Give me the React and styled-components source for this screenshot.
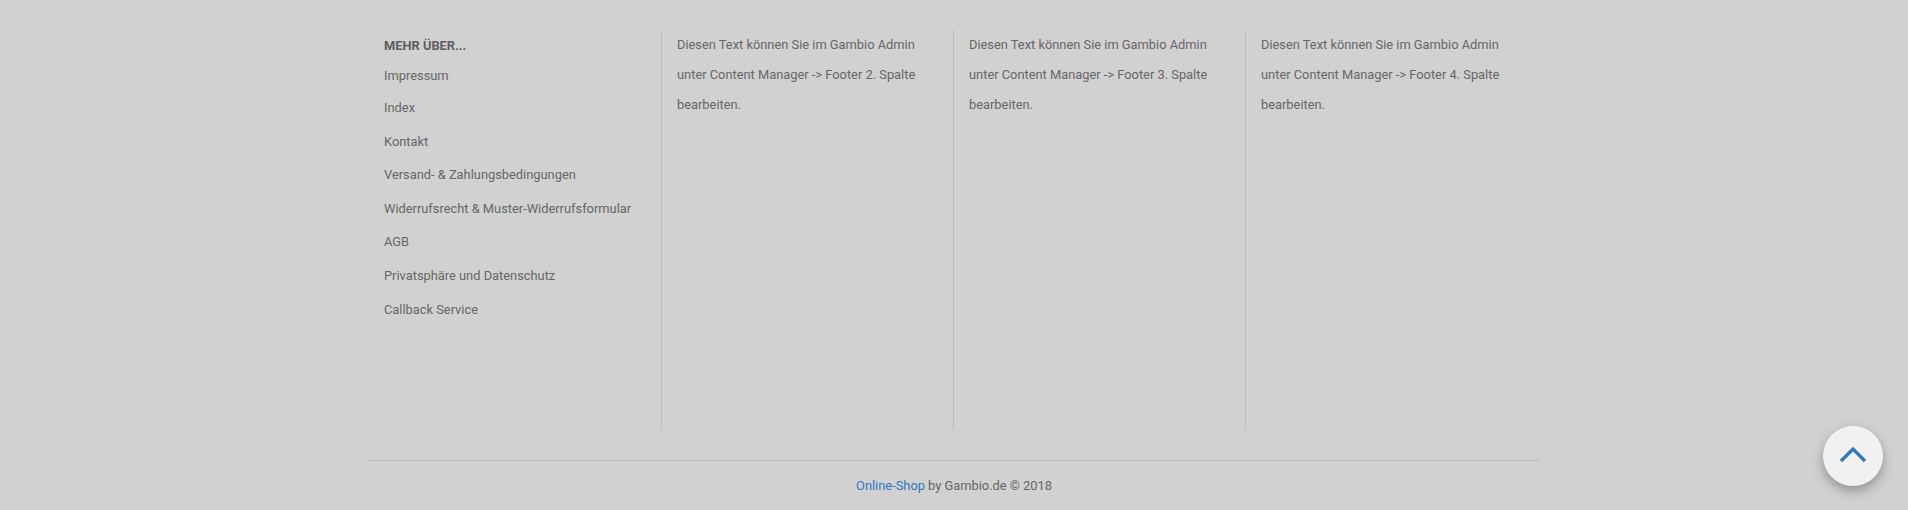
import React from "react";
import styled, { createGlobalStyle } from "styled-components";

const GlobalStyle = createGlobalStyle`
  html, body {
    margin: 0;
    padding: 0;
    background: #d1d1d1;
  }
  body {
    font-family: Roboto, "Liberation Sans", Arial, sans-serif;
    font-size: 12.85px;
    line-height: 18.57px;
    color: #666;
  }
  * {
    box-sizing: border-box;
  }
`;

const links = [
  "Impressum",
  "Index",
  "Kontakt",
  "Versand- & Zahlungsbedingungen",
  "Widerrufsrecht & Muster-Widerrufsformular",
  "AGB",
  "Privatsphäre und Datenschutz",
  "Callback Service",
];

function App() {
  return (
    <>
      <GlobalStyle />
      <Footer>
        <Container>
          <Columns>
            <Column first>
              <Heading>Mehr über...</Heading>
              <LinkList>
                {links.map((l) => (
                  <li key={l}>
                    <a href="#">{l}</a>
                  </li>
                ))}
              </LinkList>
            </Column>
            {[2, 3, 4].map((n) => (
              <Column key={n}>
                <ColumnText>
                  Diesen Text können Sie im Gambio Admin unter Content Manager
                  -&gt; Footer {n}. Spalte bearbeiten.
                </ColumnText>
              </Column>
            ))}
          </Columns>
          <Copyright>
            <a href="#">Online-Shop</a> by Gambio.de © 2018
          </Copyright>
        </Container>
      </Footer>
      <ScrollTop aria-label="Nach oben">
        <svg width="28" height="17" viewBox="0 0 28 17" fill="none">
          <path
            d="M2 15 L14 3 L26 15"
            stroke="#2f78bd"
            strokeWidth="3.3"
            strokeLinecap="butt"
          />
        </svg>
      </ScrollTop>
    </>
  );
}

const Footer = styled.footer`
  padding-top: 30px;
`;

const Container = styled.div`
  width: 1170px;
  margin: 0 auto;
`;

const Columns = styled.div`
  display: grid;
  grid-template-columns: 292px 292px 292px 1fr;
  height: 400px;
  padding-bottom: 30px;
  box-sizing: content-box;
  border-bottom: 1px solid #b9b9b9;
`;

const Column = styled.div`
  padding: 0 15px;
  border-left: ${(p) => (p.first ? "none" : "1px solid #bdbdbd")};
  height: 400px;
`;

const Heading = styled.h4`
  margin: 7px 0 11px;
  font-size: 12.85px;
  font-weight: 700;
  text-transform: uppercase;
  color: #5e5e5e;
  line-height: 18.57px;
`;

const LinkList = styled.ul`
  list-style: none;
  margin: 0;
  padding: 0;
  li {
    margin-bottom: 15px;
  }
  li:first-child {
    margin-bottom: 14px;
  }
  a {
    color: #666;
    text-decoration: none;
  }
`;

const ColumnText = styled.p`
  margin: 0;
  line-height: 30px;
  color: #666;
`;

const Copyright = styled.div`
  text-align: center;
  padding: 16px 0 16px;
  color: #666;
  a {
    color: #2f78bd;
    text-decoration: none;
  }
`;

const ScrollTop = styled.button`
  position: fixed;
  right: 25px;
  bottom: 24px;
  width: 60px;
  height: 60px;
  border-radius: 50%;
  border: none;
  background: #f1f1f1;
  box-shadow: 0 5px 12px rgba(0, 0, 0, 0.3);
  display: flex;
  align-items: center;
  justify-content: center;
  padding: 0 0 4px;
  cursor: pointer;
`;

export default App;
